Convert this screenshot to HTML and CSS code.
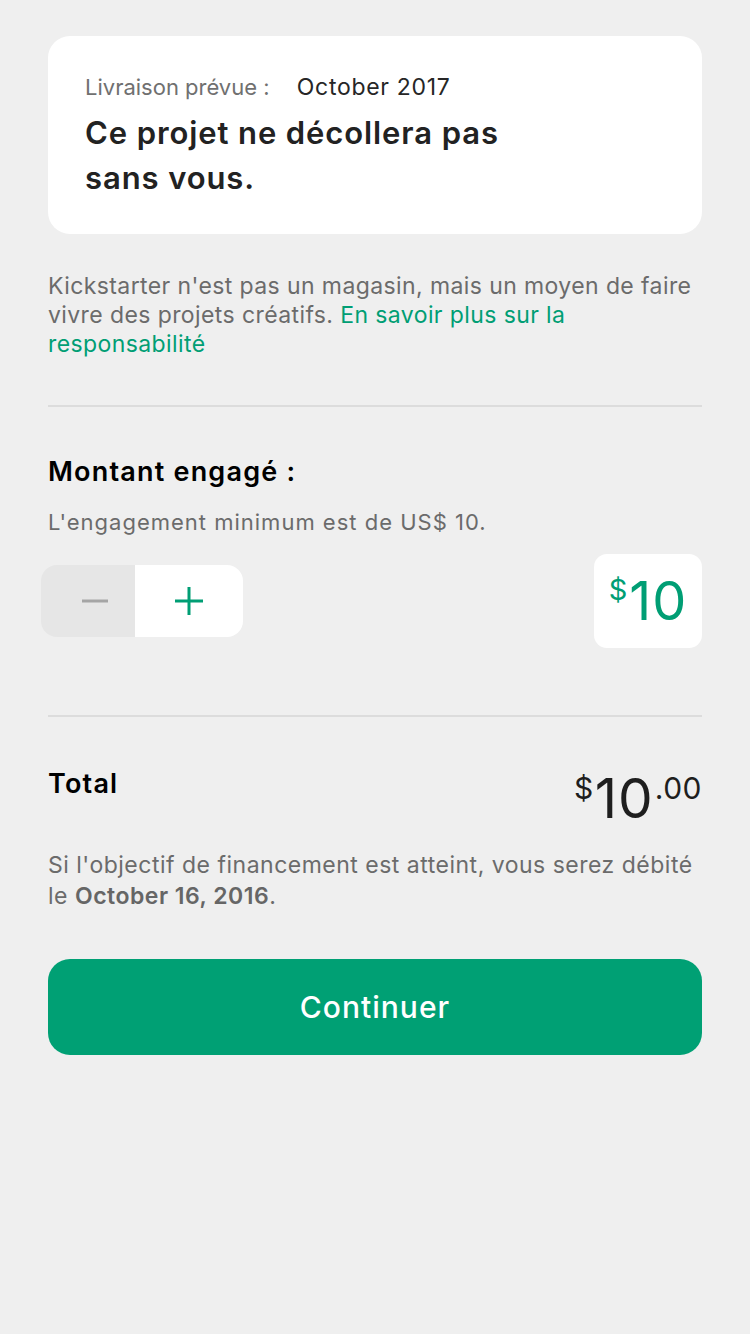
FILE: index.html
```html
<!DOCTYPE html>
<html lang="fr">
<head>
<meta charset="utf-8">
<link rel="stylesheet" href="styles.css">
</head>
<body>
<main class="page">
  <section class="card">
    <p class="delivery"><span class="delivery-label">Livraison prévue :</span> <span class="delivery-date">October 2017</span></p>
    <h1 class="headline">Ce projet ne décollera pas<br>sans vous.</h1>
  </section>

  <p class="note">Kickstarter n'est pas un magasin, mais un moyen de faire vivre des projets créatifs. <a class="link" href="#">En savoir plus sur la responsabilité</a></p>

  <hr class="divider divider-first">

  <section class="pledge">
    <h2 class="section-title">Montant engagé :</h2>
    <p class="minimum">L'engagement minimum est de US$ 10.</p>
    <div class="pledge-row">
      <div class="stepper">
        <button class="step step-minus" aria-label="moins">
          <svg width="26" height="4" viewBox="0 0 26 4"><rect x="0" y="0.5" width="26" height="3" fill="#a5a5a5"/></svg>
        </button>
        <button class="step step-plus" aria-label="plus">
          <svg width="28" height="28" viewBox="0 0 28 28"><rect x="0" y="12.5" width="28" height="3" fill="#009e74"/><rect x="12.5" y="0" width="3" height="28" fill="#009e74"/></svg>
        </button>
      </div>
      <div class="amount-box"><span class="amount-currency">$</span><span class="amount-value">10</span></div>
    </div>
  </section>

  <hr class="divider divider-second">

  <section class="total">
    <div class="total-row">
      <h2 class="section-title">Total</h2>
      <div class="total-amount"><span class="total-sup">$</span><span class="total-value">10</span><span class="total-sup">.00</span></div>
    </div>
    <p class="charge">Si l'objectif de financement est atteint, vous serez débité le <strong>October 16, 2016</strong>.</p>
  </section>

  <button class="continue">Continuer</button>
</main>
</body>
</html>
```

FILE: styles.css
```css
* { box-sizing: border-box; }
html, body {
  margin: 0;
  padding: 0;
  background: #efefef;
}
body {
  font-family: "Inter", "Roboto", "Liberation Sans", sans-serif;
  color: #222;
  width: 750px;
  height: 1334px;
}
.page {
  padding: 36px 48px 0 48px;
  display: flex;
  flex-direction: column;
}
.card {
  background: #fff;
  border-radius: 22px;
  padding: 36px 37px 34px 37px;
}
.delivery {
  margin: 0;
  font-size: 22px;
  line-height: 30px;
}
.delivery-label { color: #707070; margin-right: 21px; }
.delivery-date { color: #262626; font-size: 23px; letter-spacing: 0.7px; }
.headline {
  margin: 8px 0 0 0;
  font-size: 31px;
  line-height: 45px;
  font-weight: 600;
  letter-spacing: 0.9px;
  color: #222;
}
.note {
  margin: 38px 0 0 0;
  font-size: 23px;
  line-height: 29px;
  letter-spacing: 0.4px;
  color: #6b6b6b;
}
.link { color: #009e74; text-decoration: none; }
.divider {
  border: 0;
  height: 2px;
  background: #dcdcdc;
  margin: 0;
}
.divider-first { margin-top: 46px; }
.pledge { padding-top: 48px; }
.section-title {
  margin: 0;
  font-size: 27px;
  line-height: 34px;
  font-weight: 600;
  letter-spacing: 1.2px;
  color: #000;
}
.minimum {
  margin: 19px 0 0 0;
  font-size: 22px;
  line-height: 28px;
  letter-spacing: 1px;
  color: #6b6b6b;
}
.pledge-row {
  display: flex;
  justify-content: space-between;
  align-items: center;
  margin-top: 18px;
}
.stepper {
  display: flex;
  margin-left: -7px;
  border-radius: 16px;
  overflow: hidden;
  height: 72px;
}
.step {
  border: 0;
  padding: 0;
  display: flex;
  align-items: center;
  justify-content: center;
  height: 72px;
}
.step-minus { background: #e6e6e6; width: 94px; padding-left: 14px; }
.step-plus { background: #fff; width: 108px; }
.amount-box {
  background: #fff;
  border-radius: 13px;
  height: 94px;
  width: 108px;
  display: flex;
  align-items: flex-start;
  justify-content: center;
  padding-top: 17px;
  color: #009e74;
}
.amount-currency { font-size: 29px; line-height: 34px; margin-top: 2px; margin-right: 2px; }
.amount-value { font-size: 54px; line-height: 60px; font-weight: 400; letter-spacing: 1px; }
.divider-second { margin-top: 67px; }
.total { padding-top: 50px; }
.total-row {
  display: flex;
  justify-content: space-between;
  align-items: flex-start;
}
.total-amount {
  display: flex;
  align-items: flex-start;
  color: #1e1e1e;
}
.total-sup { font-size: 30px; line-height: 34px; margin-top: 4px; letter-spacing: 0.5px; }
.total-value { font-size: 55px; line-height: 62px; letter-spacing: 1px; margin: 0 1px; }
.charge {
  margin: 21px 0 0 0;
  font-size: 23px;
  line-height: 31px;
  letter-spacing: 0.5px;
  color: #6b6b6b;
}
.charge strong { font-weight: 600; color: #666; }
.continue {
  margin-top: 47px;
  height: 96px;
  border: 0;
  border-radius: 22px;
  background: #00a074;
  color: #fff;
  font-family: inherit;
  font-size: 30px;
  font-weight: 500;
  letter-spacing: 1px;
}
```
